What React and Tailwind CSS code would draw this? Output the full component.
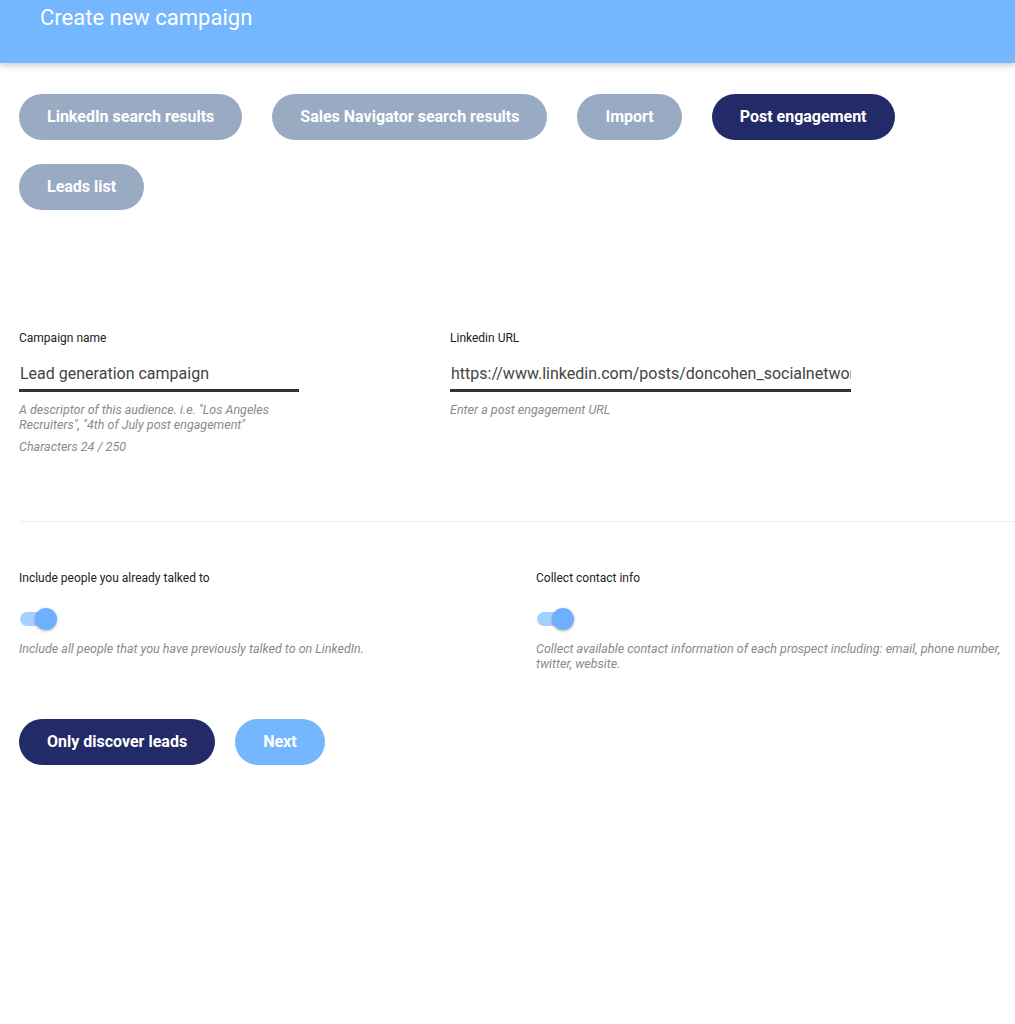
import React from 'react';

const sources = ['LinkedIn search results', 'Sales Navigator search results', 'Import', 'Post engagement', 'Leads list'];

const Toggle = () => (
  <div className="relative h-[22px] w-[38px]">
    <div className="absolute left-[1px] top-[4px] h-[14px] w-[34px] rounded-full bg-[#a6d0ff]" />
    <div className="absolute left-[16px] top-0 h-[22px] w-[22px] rounded-full bg-[#6eb0ff] shadow-[0_1px_3px_rgba(0,0,0,0.3)]" />
  </div>
);

const App = () => {
  return (
    <main className="min-h-screen bg-white font-['Roboto',sans-serif]">
      {/* Header */}
      <header className="h-[63px] bg-[#74b7ff] pl-[40px] pt-[4px] shadow-[0_3px_6px_rgba(0,0,0,0.18)]">
        <h1 className="text-[22px] leading-[28px] text-white">Create new campaign</h1>
      </header>

      <div className="pl-[19px]">
        {/* Source selector */}
        <div className="mt-[31px] flex flex-wrap gap-x-[30px] gap-y-[24px] pr-[100px]">
          {sources.map((s) => (
            <button
              key={s}
              className={
                s === 'Post engagement'
                  ? 'h-[46px] rounded-full bg-[#222a68] px-[28px] text-[16px] font-bold text-white'
                  : 'h-[46px] rounded-full bg-[#99abc2] px-[28px] text-[16px] font-bold text-white'
              }
            >
              {s}
            </button>
          ))}
        </div>

        {/* Fields */}
        <div className="mt-[120px] flex">
          <div className="w-[431px]">
            <label className="block text-[12px] leading-[16px] text-[#222]">Campaign name</label>
            <input
              readOnly
              value="Lead generation campaign"
              className="mt-[18px] block w-[280px] border-b-[3px] border-[#333] pb-[5px] pl-[1px] text-[16px] leading-[20px] text-[#444] outline-none"
            />
            <p className="mt-[10px] w-[280px] text-[12.5px] italic leading-[15px] text-[#8a8a8a]">
              A descriptor of this audience. i.e. "Los Angeles Recruiters", "4th of July post engagement"
            </p>
            <p className="mt-[7px] text-[12.5px] italic leading-[15px] text-[#8a8a8a]">Characters 24 / 250</p>
          </div>
          <div>
            <label className="block text-[12px] leading-[16px] text-[#222]">Linkedin URL</label>
            <input
              readOnly
              value="https://www.linkedin.com/posts/doncohen_socialnetworking"
              className="mt-[18px] block w-[401px] border-b-[3px] border-[#333] pb-[5px] pl-[1px] text-[16px] leading-[20px] text-[#444] outline-none"
            />
            <p className="mt-[10px] text-[12.5px] italic leading-[15px] text-[#8a8a8a]">Enter a post engagement URL</p>
          </div>
        </div>

        <hr className="mt-[67px] border-t border-[#eeeeee]" />

        {/* Options */}
        <div className="mt-[48px] flex">
          <div className="w-[517px]">
            <p className="text-[12px] leading-[16px] text-[#222]">Include people you already talked to</p>
            <div className="mt-[22px]">
              <Toggle />
            </div>
            <p className="mt-[11px] text-[12.5px] italic leading-[15px] text-[#8a8a8a]">
              Include all people that you have previously talked to on LinkedIn.
            </p>
          </div>
          <div className="flex-1 pr-[10px]">
            <p className="text-[12px] leading-[16px] text-[#222]">Collect contact info</p>
            <div className="mt-[22px]">
              <Toggle />
            </div>
            <p className="mt-[11px] text-[12.5px] italic leading-[15px] text-[#8a8a8a]">
              Collect available contact information of each prospect including: email, phone number, twitter, website.
            </p>
          </div>
        </div>

        {/* Actions */}
        <div className="mt-[48px] flex gap-[20px]">
          <button className="h-[46px] rounded-full bg-[#222a68] px-[28px] text-[16px] font-bold text-white">
            Only discover leads
          </button>
          <button className="h-[46px] rounded-full bg-[#74b7ff] px-[28px] text-[16px] font-bold text-white">
            Next
          </button>
        </div>
      </div>
    </main>
  );
};

export default App;
